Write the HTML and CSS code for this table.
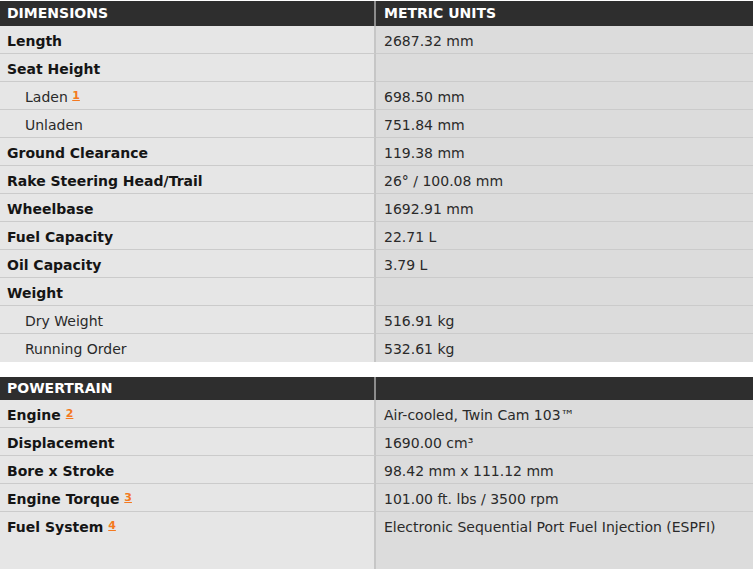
FILE: index.html
```
<!DOCTYPE html>
<html>
<head>
<meta charset="utf-8">
<link rel="stylesheet" href="styles.css">
</head>
<body>
<table class="spec">
  <thead>
    <tr class="head"><th class="label">DIMENSIONS</th><th class="value">METRIC UNITS</th></tr>
  </thead>
  <tbody>
    <tr><td class="label">Length</td><td class="value">2687.32 mm</td></tr>
    <tr><td class="label">Seat Height</td><td class="value"></td></tr>
    <tr><td class="label sub">Laden <a class="fn">1</a></td><td class="value">698.50 mm</td></tr>
    <tr><td class="label sub">Unladen</td><td class="value">751.84 mm</td></tr>
    <tr><td class="label">Ground Clearance</td><td class="value">119.38 mm</td></tr>
    <tr><td class="label">Rake Steering Head/Trail</td><td class="value">26° / 100.08 mm</td></tr>
    <tr><td class="label">Wheelbase</td><td class="value">1692.91 mm</td></tr>
    <tr><td class="label">Fuel Capacity</td><td class="value">22.71 L</td></tr>
    <tr><td class="label">Oil Capacity</td><td class="value">3.79 L</td></tr>
    <tr><td class="label">Weight</td><td class="value"></td></tr>
    <tr><td class="label sub">Dry Weight</td><td class="value">516.91 kg</td></tr>
    <tr><td class="label sub">Running Order</td><td class="value">532.61 kg</td></tr>
  </tbody>
</table>
<table class="spec second">
  <thead>
    <tr class="head"><th class="label">POWERTRAIN</th><th class="value"></th></tr>
  </thead>
  <tbody>
    <tr><td class="label">Engine <a class="fn">2</a></td><td class="value">Air-cooled, Twin Cam 103™</td></tr>
    <tr><td class="label">Displacement</td><td class="value">1690.00 cm³</td></tr>
    <tr><td class="label">Bore x Stroke</td><td class="value">98.42 mm x 111.12 mm</td></tr>
    <tr><td class="label">Engine Torque <a class="fn">3</a></td><td class="value">101.00 ft. lbs / 3500 rpm</td></tr>
    <tr class="tall"><td class="label">Fuel System <a class="fn">4</a></td><td class="value">Electronic Sequential Port Fuel Injection (ESPFI)</td></tr>
  </tbody>
</table>
</body>
</html>
```
FILE: styles.css
```
html, body {
  margin: 0;
  padding: 0;
  background: #ffffff;
}
body {
  padding-top: 1px;
  font-family: "DejaVu Sans", Verdana, sans-serif;
  font-size: 14px;
  color: #1e1e1e;
}
.spec {
  width: 753px;
  border-collapse: separate;
  border-spacing: 0;
  table-layout: fixed;
}
.spec th, .spec td { box-sizing: border-box; }
.spec .label { width: 376px; }
.second { margin-top: 15px; }
.head th {
  background: #2e2e2e;
  color: #ffffff;
  font-weight: bold;
  text-align: left;
  height: 25px;
  padding: 0 0 0 7px;
  line-height: 25px;
  vertical-align: middle;
}
.second .head th { height: 23px; line-height: 23px; }
.head th.label { border-right: 2px solid #8c8c8c; }
.head th.value { padding-left: 8px; }
td {
  height: 28px;
  padding: 7px 0 0 7px;
  vertical-align: top;
  line-height: 17px;
  border-bottom: 1px solid #cbcbcb;
}
td.label {
  background: #e6e6e6;
  font-weight: bold;
  color: #151515;
  border-right: 2px solid #c6c6c6;
}
td.label.sub {
  font-weight: normal;
  padding-left: 25px;
  color: #2a2a2a;
}
td.value {
  background: #dcdcdc;
  padding-left: 8px;
  color: #2a2a2a;
}
tbody tr:last-child td { border-bottom: none; }
.tall td { height: 57px; }
.fn {
  font-size: 11px;
  font-weight: bold;
  color: #f47920;
  text-decoration: underline;
  vertical-align: 3px;
  line-height: 0;
}
```
